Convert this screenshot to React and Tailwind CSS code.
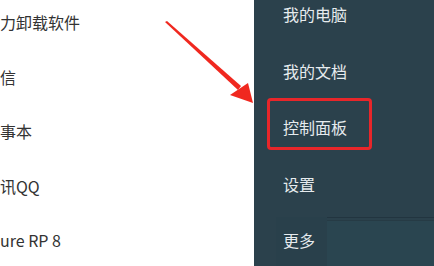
export default function App() {
  const left = ['力卸载软件', '信', '事本', '讯QQ', 'ure RP 8']
  const right = ['我的电脑', '我的文档', '控制面板', '设置']

  return (
    <div
      className="relative flex w-[434px] h-[266px] overflow-hidden bg-white"
      style={{ fontFamily: '"Noto Sans CJK SC", "Noto Sans", sans-serif' }}
    >
      {/* Left list — program names */}
      <div className="w-[254px] flex flex-col pt-[11px] gap-[32.5px] text-[16px] leading-[22px] text-[#333]">
        {left.map(t => (
          <div key={t}>{t}</div>
        ))}
      </div>

      {/* Right panel */}
      <div className="relative flex-1 flex flex-col bg-[#2b414c] text-[16px] leading-[22px] text-[#e6ebee]">
        <div className="flex flex-col pt-[3px] gap-[34.5px] pl-[29px]">
          {right.map(t => (
            <div key={t}>{t}</div>
          ))}
        </div>

        {/* bottom row */}
        <div className="mt-[22.5px] ml-[22px] flex flex-1">
          <div className="w-[51px] pl-[7px] pt-[12px] bg-[#29404b]">更多</div>
          <div className="flex-1 flex flex-col border-t border-[#223540] pt-[2px]">
            <div className="flex-1 border-t border-[#263b45] bg-[#2a4550]" />
          </div>
        </div>

        {/* highlight box */}
        <div className="absolute left-[13px] top-[98px] w-[105px] h-[52px] border-[3px] border-[#e8262a] rounded-[4px]" />
      </div>

      {/* red arrow */}
      <svg className="absolute left-0 top-0" width="434" height="266" viewBox="0 0 434 266">
        <polygon points="165,22 167,21 241,86 238,90" fill="#f0281f" />
        <polygon points="230,95 248,83 253,103" fill="#f0281f" />
      </svg>
    </div>
  )
}
